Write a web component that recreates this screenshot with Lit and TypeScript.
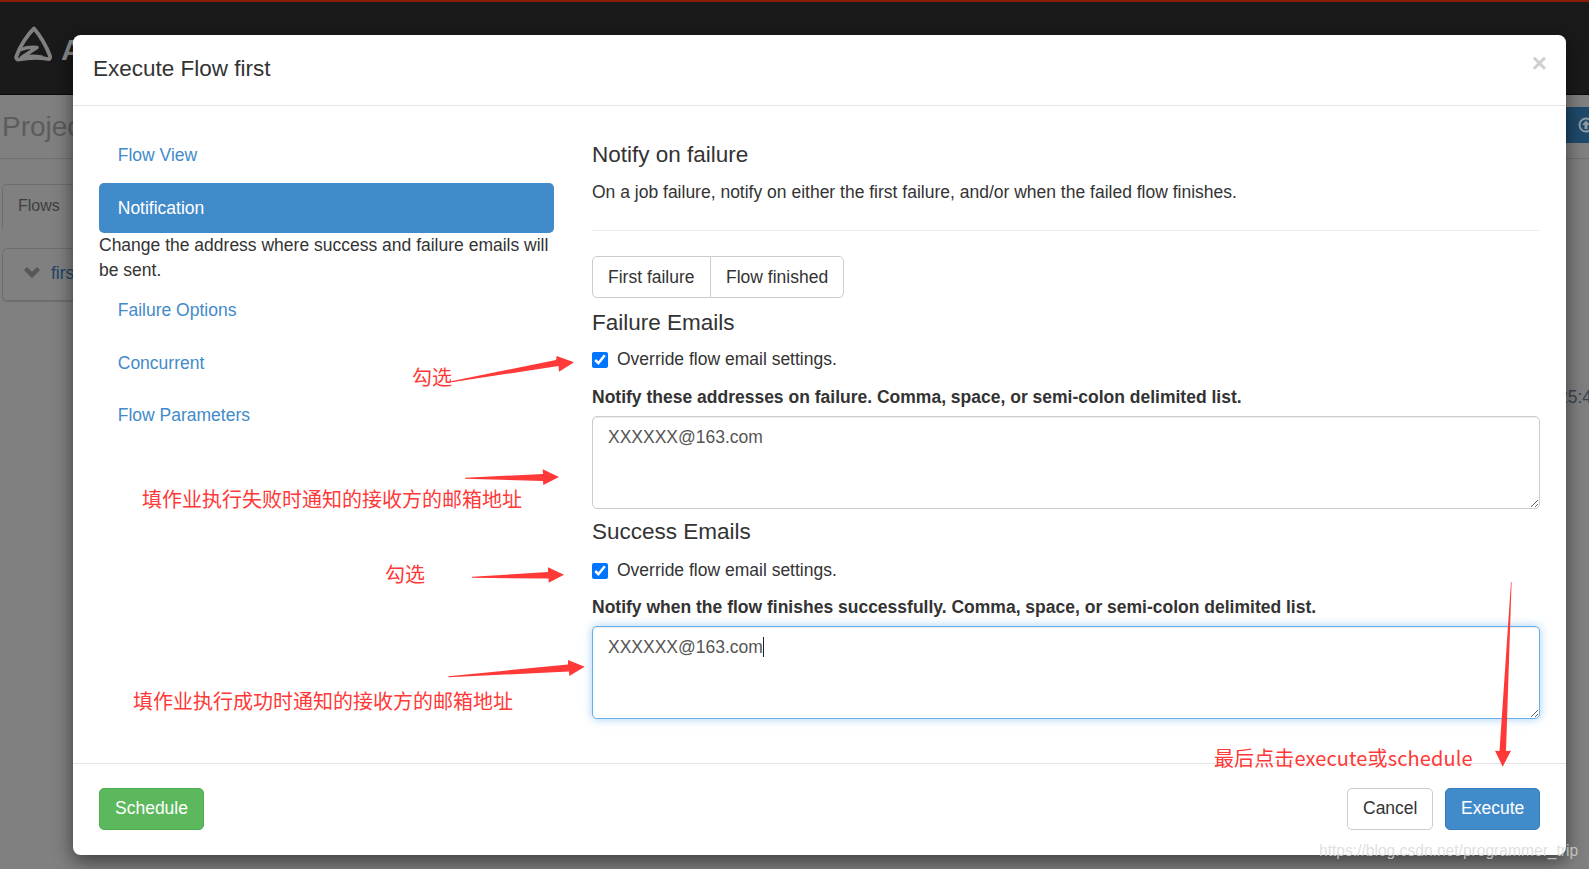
import { LitElement, html, css, svg } from "lit";
import { customElement } from "lit/decorators.js";

const SANS = `"Liberation Sans", Arial, "Noto Sans CJK SC", sans-serif`;

const ARROWS = [
  "451,381.2 556,360 556.7,356 574,362.3 559,371.7 558.5,366 451.5,382.2",
  "465,477.8 543,474 542.7,469.3 559,477 543.3,485 543,481 465,478.8",
  "472,576.8 548,572 548,567.3 564,574.7 548.7,582.7 548.5,578.5 472,577.8",
  "448.5,676.2 568,664.5 568,660 584.7,666.7 569.3,676 569,671.5 448.5,677.2",
  "1511,582 1499.5,751 1495,750.7 1502.7,766.7 1511,750.7 1506,751 1511.6,582",
];

const NOTES = [
  { text: "勾选", x: 412, y: 364, wide: false },
  { text: "勾选", x: 385, y: 561, wide: false },
  { text: "填作业执行失败时通知的接收方的邮箱地址", x: 142, y: 486, wide: false },
  { text: "填作业执行成功时通知的接收方的邮箱地址", x: 133, y: 688, wide: false },
  { text: "最后点击execute或schedule", x: 1214, y: 745, wide: true },
];

@customElement("app-root")
export class AppRoot extends LitElement {
  static styles = css`
    :host {
      display: block;
      position: relative;
      width: 1589px;
      height: 869px;
      overflow: hidden;
      background: #808080;
      font-family: ${css([SANS] as any)};
      font-size: 17.5px;
      line-height: 25px;
      color: #333;
    }
    * { box-sizing: border-box; }

    /* dimmed page behind the dialog */
    .navbar {
      height: 95px;
      background: #1a1a1a;
      border-top: 2px solid #8a1c08;
      border-bottom: 1px solid #0c0c0c;
      display: flex;
      align-items: flex-start;
      padding: 24px 0 0 13px;
      gap: 8px;
    }
    .brand { font-size: 30px; font-weight: 700; color: #8c8c8c; line-height: 48px; }
    .page-head {
      height: 64px;
      border-bottom: 1px solid #707070;
      display: flex;
      justify-content: space-between;
      padding: 12px 0 0 2px;
    }
    .page-title { font-size: 28px; line-height: 36px; color: #5c5c5c; padding-top: 2px; }
    .upload {
      width: 23px;
      height: 36px;
      background: #1f4a6b;
      display: flex;
      align-items: center;
      padding-left: 12px;
      overflow: hidden;
      color: #8d9ba6;
    }
    .upload svg { flex: none; }
    .tabs { padding: 25px 0 0 2px; height: 89px; }
    .tab {
      width: 90px;
      height: 45px;
      padding: 8px 0 0 15px;
      border: 1px solid #6e6e6e;
      border-bottom: 0;
      border-radius: 5px 5px 0 0;
      color: #3f3f3f;
      font-size: 16px;
    }
    .flow-row {
      margin-left: 2px;
      width: 110px;
      height: 53px;
      border: 1px solid #6e6e6e;
      border-radius: 5px;
      box-shadow: 0 1px 0 #6e6e6e;
      display: flex;
      align-items: center;
      padding-left: 20px;
      gap: 10px;
      color: #214566;
    }
    .flow-row svg { margin-bottom: 5px; }
    .flow-row span { margin-bottom: 2px; }
    .stamp {
      position: absolute;
      left: 1558px;
      top: 385px;
      color: #3a4654;
    }

    /* dialog */
    .modal {
      position: absolute;
      left: 73px;
      top: 35px;
      width: 1493px;
      height: 820px;
      background: #fff;
      border-radius: 7.5px;
      box-shadow: 0 6px 19px rgba(0, 0, 0, 0.55);
      display: flex;
      flex-direction: column;
    }
    .modal-header {
      height: 71px;
      flex: none;
      border-bottom: 1px solid #e5e5e5;
      display: flex;
      justify-content: space-between;
      padding: 19px 17px 0 20px;
    }
    .modal-title { margin: 0; font-size: 22.5px; font-weight: 400; line-height: 30px; }
    .close {
      font-size: 26px;
      font-weight: 700;
      line-height: 20px;
      color: #cfcfcf;
      margin: -1px 2px 0 0;
    }
    .modal-body {
      flex: 1;
      display: flex;
      gap: 38px;
      padding: 24.5px 26px 0;
      min-height: 0;
    }
    .side { width: 455px; flex: none; }
    .side a {
      display: block;
      height: 50px;
      padding: 12.5px 18.75px;
      color: #428bca;
      border-radius: 5px;
      margin-bottom: 2.5px;
    }
    .side a.active { background: #428bca; color: #fff; margin-bottom: 0; }
    .side p { margin: 0 0 2.5px; }
    .main { flex: 1; min-width: 0; }
    h4 { margin: 0; font-size: 22.5px; font-weight: 400; line-height: 24.75px; }
    .h-notify { margin-top: 12px; }
    .lead { margin: 12.25px 0 25px; }
    hr { margin: 0; border: 0; border-top: 1px solid #eee; }
    .btn-group { display: inline-flex; margin-top: 25px; vertical-align: top; white-space: nowrap; }
    .btn-group span {
      height: 42px;
      padding: 8px 15px;
      border: 1px solid #ccc;
      background: #fff;
    }
    .btn-group span:first-child { border-radius: 5px 0 0 5px; width: 119px; }
    .btn-group span:last-child { border-radius: 0 5px 5px 0; margin-left: -1px; width: 134px; }
    .h-fail { margin-top: 13.6px; }
    .h-succ { margin-top: 11px; }
    .check { display: flex; align-items: center; gap: 9px; height: 25px; margin-top: 11.6px; }
    .check input { width: 16px; height: 16px; margin: 1px 0 0; flex: none; }
    .field-label { margin: 12.5px 0 6.5px; font-weight: 700; }
    .succ .check { margin-top: 13.6px; }
    .succ .field-label { margin-top: 11.5px; }
    .area { position: relative; height: 92.7px; }
    textarea {
      display: block;
      width: 100%;
      height: 100%;
      padding: 7.5px 15px;
      border: 1px solid #ccc;
      border-radius: 5px;
      font: inherit;
      line-height: 25px;
      color: #555;
      outline: none;
      background: #fff;
      box-shadow: inset 0 1px 1px rgba(0, 0, 0, 0.075);
    }
    textarea.focus {
      border-color: #66afe9;
      box-shadow: inset 0 1px 1px rgba(0, 0, 0, 0.075), 0 0 10px rgba(102, 175, 233, 0.6);
    }
    .caret {
      position: absolute;
      left: 170.5px;
      top: 11px;
      width: 1px;
      height: 20px;
      background: #222;
    }
    .modal-footer {
      flex: none;
      height: 92px;
      border-top: 1px solid #e5e5e5;
      padding: 24px 26px 0;
      display: flex;
      align-items: flex-start;
      gap: 12px;
    }
    .btn {
      height: 42px;
      padding: 7px 15px;
      border: 1px solid #ccc;
      border-radius: 5px;
      background: #fff;
      text-align: center;
    }
    .btn.ok { background: #5cb85c; border-color: #4cae4c; color: #fff; width: 105px; margin-right: auto; }
    .btn.cancel { width: 86px; }
    .btn.go { background: #428bca; border-color: #357ebd; color: #fff; width: 95px; }

    /* red annotations pasted on the screenshot */
    .marks { position: absolute; inset: 0; width: 1589px; height: 869px; pointer-events: none; }
    .marks polygon { fill: #ff3838; }
    .note {
      position: absolute;
      font-family: "Noto Sans CJK SC", ${css([SANS] as any)};
      font-size: 20px;
      line-height: 26px;
      font-weight: 400;
      color: #ff3838;
      white-space: nowrap;
    }
    .note.wide { letter-spacing: 0.12px; }
    .watermark {
      position: absolute;
      left: 1319px;
      top: 840px;
      font-size: 15.6px;
      line-height: 22px;
      color: rgba(215, 215, 215, 0.8);
      white-space: nowrap;
    }
  `;

  private logo() {
    return html`<svg width="40" height="38" viewBox="13 26 40 38" fill="none" stroke="#808080">
      <path d="M34 28.500 C39 34 46.500 46 50 56 C50.500 58 49.500 59.500 48 59 C40 57.500 28 57.500 19.500 59.500 C17 60 15.500 58 16.500 56 C20 46 28 34 34 28.500 Z" stroke-width="3.800" stroke-linejoin="round"/>
      <path d="M21 49.500 C26 47.500 32 47 37 47.500 L21.500 57.500 C28 56 35 56 41.500 57" stroke-width="3.400" stroke-linecap="round" stroke-linejoin="round"/>
    </svg>`;
  }

  render() {
    return html`
      <div class="navbar">${this.logo()}<span class="brand">A</span></div>
      <div class="page-head">
        <span class="page-title">Project</span>
        <span class="upload">
          <svg width="16" height="16" viewBox="0 0 16 16">
            <circle cx="8" cy="8" r="6.500" fill="none" stroke="currentColor" stroke-width="2"/>
            <path d="M8 3.500 L12 8 H9.500 V12 H6.500 V8 H4 Z" fill="currentColor"/>
          </svg>
        </span>
      </div>
      <div class="tabs"><div class="tab">Flows</div></div>
      <div class="flow-row">
        <svg width="18" height="12" viewBox="0 0 18 12">
          <path d="M2.500 2.500 L9 9 L15.500 2.500" fill="none" stroke="#575757" stroke-width="4.500"/>
        </svg>
        <span>first</span>
      </div>
      <div class="stamp">25:4</div>

      <div class="modal">
        <div class="modal-header">
          <h3 class="modal-title">Execute Flow first</h3>
          <span class="close">×</span>
        </div>
        <div class="modal-body">
          <div class="side">
            <a>Flow View</a>
            <a class="active">Notification</a>
            <p>Change the address where success and failure emails will be sent.</p>
            <a>Failure Options</a>
            <a>Concurrent</a>
            <a>Flow Parameters</a>
          </div>
          <div class="main">
            <h4 class="h-notify">Notify on failure</h4>
            <p class="lead">On a job failure, notify on either the first failure, and/or when the failed flow finishes.</p>
            <hr />
            <div class="btn-group"><span>First failure</span><span>Flow finished</span></div>
            <h4 class="h-fail">Failure Emails</h4>
            <label class="check"><input type="checkbox" checked />Override flow email settings.</label>
            <div class="field-label">Notify these addresses on failure. Comma, space, or semi-colon delimited list.</div>
            <div class="area"><textarea .value=${"XXXXXX@163.com"}></textarea></div>
            <div class="succ">
              <h4 class="h-succ">Success Emails</h4>
              <label class="check"><input type="checkbox" checked />Override flow email settings.</label>
              <div class="field-label">Notify when the flow finishes successfully. Comma, space, or semi-colon delimited list.</div>
              <div class="area">
                <textarea class="focus" .value=${"XXXXXX@163.com"}></textarea>
                <span class="caret"></span>
              </div>
            </div>
          </div>
        </div>
        <div class="modal-footer">
          <div class="btn ok">Schedule</div>
          <div class="btn cancel">Cancel</div>
          <div class="btn go">Execute</div>
        </div>
      </div>

      <svg class="marks" viewBox="0 0 1589 869">
        ${ARROWS.map((p) => svg`<polygon points=${p}></polygon>`)}
      </svg>
      ${NOTES.map((n) => html`<span class="note ${n.wide ? "wide" : ""}" style="left:${n.x}px;top:${n.y}px">${n.text}</span>`)}
      <div class="watermark">https://blog.csdn.net/programmer_trip</div>
    `;
  }
}
